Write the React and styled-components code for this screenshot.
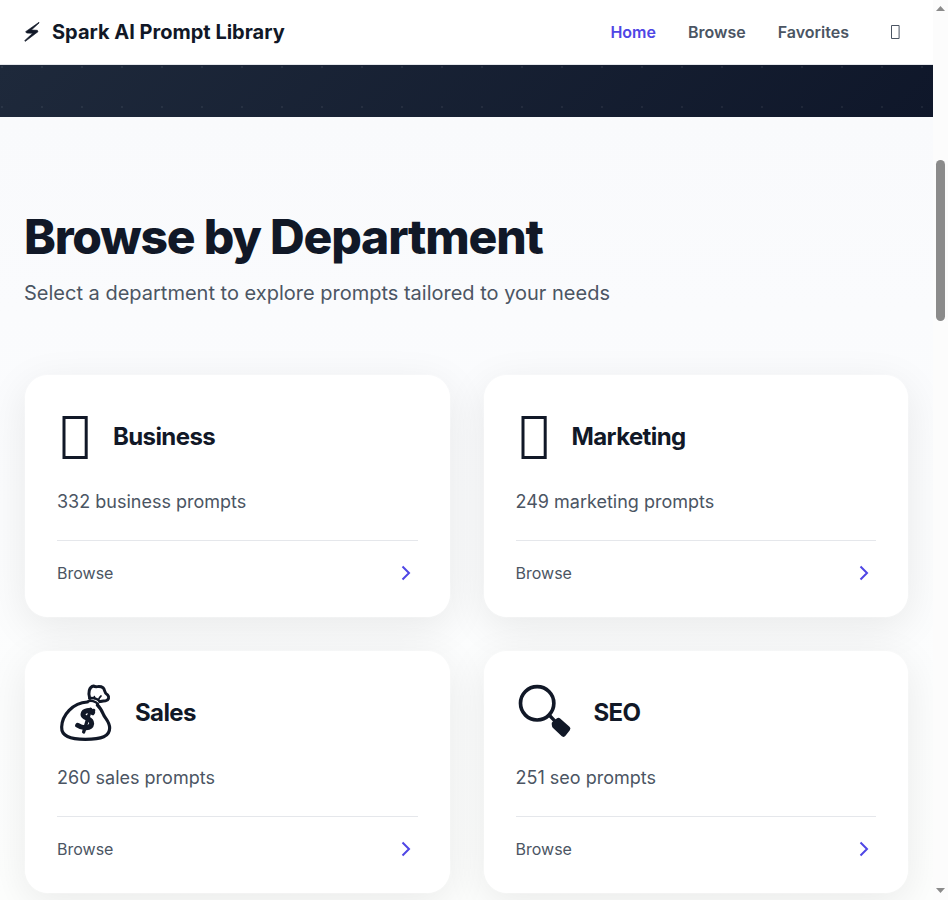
import React from "react";
import styled, { createGlobalStyle } from "styled-components";

const GlobalStyle = createGlobalStyle`
  * { box-sizing: border-box; }
  body { margin: 0; overflow: hidden; background: #fff; }
  body, button { font-family: Inter, "Liberation Sans", sans-serif; }
  h1, h2, h3, p { margin: 0; }
`;

const Window = styled.div`
  display: flex;
  width: 948px;
  height: 900px;
  overflow: hidden;
  color: #111827;
`;
const Page = styled.div`
  width: 933px;
  height: 900px;
  overflow: hidden;
`;
const Header = styled.header`
  display: flex;
  align-items: center;
  justify-content: space-between;
  height: 65px;
  padding: 0 24px;
  background: #fff;
  border-bottom: 1px solid #e5e7eb;
`;
const Brand = styled.div`
  display: flex;
  align-items: center;
  gap: 12px;
  font-size: 20px;
  font-weight: 700;
  line-height: 32px;
`;
const Bolt = styled.svg`
  width: 16px;
  height: 20px;
  fill: #111827;
  stroke: #111827;
  stroke-width: 2;
`;
const Nav = styled.nav`
  display: flex;
  align-items: center;
  gap: 32px;
`;
const NavLink = styled.a`
  font-size: 16px;
  font-weight: 600;
  line-height: 24px;
  color: ${(p) => (p.$active ? "#4f46e5" : "#4b5563")};
`;
const ThemeButton = styled.button`
  display: flex;
  border: 0;
  background: none;
  padding: 8px;
  color: #4b5563;
`;
const ThemeGlyph = styled.svg`
  width: 12px;
  height: 20px;
  fill: none;
  stroke: currentColor;
`;
const Hero = styled.div`
  height: 52px;
  background:
    radial-gradient(circle at 2px 2px, rgba(255, 255, 255, 0.06) 1px, transparent 1px) 0 0 / 40px 40px,
    linear-gradient(135deg, #1e293b 0%, #0f172a 100%);
`;
const Departments = styled.main`
  height: 783px;
  padding: 89px 24px 0;
  background: linear-gradient(180deg, #f9fafc 0%, #fafbfd 25%, #fdfefd 100%);
`;
const Title = styled.h1`
  font-size: 48px;
  font-weight: 800;
  line-height: 62px;
  letter-spacing: -0.025em;
`;
const Subtitle = styled.p`
  margin-top: 9px;
  font-size: 20px;
  line-height: 32px;
  color: #4b5563;
`;
const Grid = styled.section`
  display: grid;
  grid-template-columns: 1fr 1fr;
  gap: 32px;
  margin-top: 65px;
`;
const Card = styled.article`
  height: 244px;
  padding: 32px;
  border: 1px solid rgba(255, 255, 255, 0.2);
  border-radius: 24px;
  background: #fff;
  background-clip: padding-box;
  box-shadow: 0 10px 40px rgba(0, 0, 0, 0.08);
`;
const CardHead = styled.div`
  display: flex;
  align-items: center;
  gap: 20px;
  height: 60px;
`;
const CardIcon = styled.svg`
  width: ${(p) => p.$width}px;
  height: 60px;
  fill: none;
  stroke: #111827;
  stroke-linecap: round;
  stroke-linejoin: ${(p) => (p.$sharp ? "miter" : "round")};
`;
const CardTitle = styled.h2`
  font-size: 24px;
  font-weight: 700;
  line-height: 32px;
  letter-spacing: -0.025em;
`;
const Count = styled.p`
  margin-top: 20px;
  font-size: 18px;
  line-height: 29px;
  color: #4b5563;
`;
const CardFoot = styled.div`
  display: flex;
  align-items: center;
  justify-content: space-between;
  height: 45px;
  margin-top: 24px;
  padding: 20px 0 0;
  border-top: 1px solid #e5e7eb;
  font-size: 16px;
  line-height: 24px;
  color: #4b5563;
`;
const Chevron = styled.svg`
  width: 24px;
  height: 24px;
  fill: none;
  stroke: #4f46e5;
  stroke-width: 2;
`;
const Scrollbar = styled.div`
  display: flex;
  flex-direction: column;
  align-items: center;
  width: 15px;
  height: 900px;
  padding: 6px 0 7px;
  background: #fcfcfc;
`;
const Thumb = styled.div`
  width: 9px;
  height: 161px;
  margin: 149px 0 auto;
  border-radius: 5px;
  background: #8b8b8b;
`;
const Arrow = styled.svg`
  width: 9px;
  height: 5px;
  fill: #8b8b8b;
`;

const BoxIcon = () => (
  <CardIcon $width={36} $sharp viewBox="0 0 36 60">
    <path d="M7 10.5h22.2v40H7z" strokeWidth="3" />
  </CardIcon>
);

const MoneyBagIcon = () => (
  <CardIcon $width={58} viewBox="15 21 174 180" strokeWidth="9.5">
    <path d="M106 78C62 80 30 118 29 153c-1 27 24 37 71 37 50 0 73-9 73-34 0-17-11-27-17-37-5-11-9-22-20-32" />
    <path d="M108 76c8-4 22-1 30 8M112 67c10-3 24 1 31 9" strokeWidth="7" />
    <path d="M113 66c-5-15-2-34 12-36 7 6 17-3 28 5 8 7 1 14 14 22 6 6 3 16-6 17-7 0-10 1-18 3" strokeWidth="9" />
    <path d="M128 68l-1-6M139 72c2-5 4-9 8-12" strokeWidth="5" />
    <path d="M122 109c-8-8-27-7-29 6-1 12 27 11 26 28-2 16-28 15-42 5" strokeWidth="15" />
    <path d="M116 100l-21 68M125 103l-3 10" strokeWidth="10" />
  </CardIcon>
);

const MagnifierIcon = () => (
  <CardIcon $width={58} viewBox="12.5 21 174 180">
    <circle cx="76" cy="82" r="50" strokeWidth="11" />
    <path d="M112 117l18 19" strokeWidth="10" />
    <path d="M127 143l13-10 28 25-13 17-27-25z" fill="#111827" strokeWidth="15" />
  </CardIcon>
);

const departments = [
  { Icon: BoxIcon, name: "Business", text: "332 business prompts" },
  { Icon: BoxIcon, name: "Marketing", text: "249 marketing prompts" },
  { Icon: MoneyBagIcon, name: "Sales", text: "260 sales prompts" },
  { Icon: MagnifierIcon, name: "SEO", text: "251 seo prompts" },
];

export default function App() {
  return (
    <Window>
      <GlobalStyle />
      <Page>
        <Header>
          <Brand>
            <Bolt viewBox="0 0 48 60">
              <path d="M45 1 5 29l3 4 18 1L2 56l2 2L42 29l-2-4-18-1L45 3z" />
            </Bolt>
            <span>Spark AI Prompt Library</span>
          </Brand>
          <Nav>
            <NavLink $active>Home</NavLink>
            <NavLink>Browse</NavLink>
            <NavLink>Favorites</NavLink>
            <ThemeButton aria-label="Theme">
              <ThemeGlyph viewBox="0 0 12 20">
                <path d="M2.5 3.5h7.6v13h-7.6z" />
              </ThemeGlyph>
            </ThemeButton>
          </Nav>
        </Header>
        <Hero />
        <Departments>
          <Title>Browse by Department</Title>
          <Subtitle>Select a department to explore prompts tailored to your needs</Subtitle>
          <Grid>
            {departments.map(({ Icon, name, text }) => (
              <Card key={name}>
                <CardHead>
                  <Icon />
                  <CardTitle>{name}</CardTitle>
                </CardHead>
                <Count>{text}</Count>
                <CardFoot>
                  <span>Browse</span>
                  <Chevron viewBox="0 0 24 24">
                    <path d="M8.5 5.5 15 12l-6.5 6.5" />
                  </Chevron>
                </CardFoot>
              </Card>
            ))}
          </Grid>
        </Departments>
      </Page>
      <Scrollbar>
        <Arrow viewBox="0 0 9 5"><path d="M4.5 0 9 5H0z" /></Arrow>
        <Thumb />
        <Arrow viewBox="0 0 9 5"><path d="M0 0h9L4.5 5z" /></Arrow>
      </Scrollbar>
    </Window>
  );
}
